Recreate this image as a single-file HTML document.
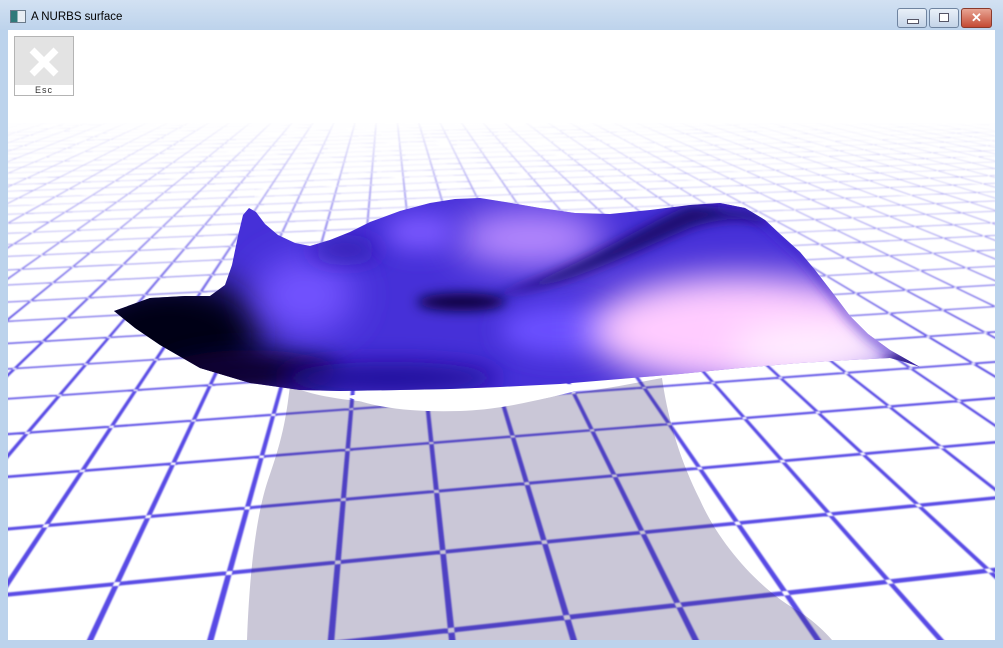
<!DOCTYPE html>
<html><head><meta charset="utf-8"><style>
html,body{margin:0;padding:0;width:1003px;height:648px;overflow:hidden;background:#bcd3ec;font-family:"Liberation Sans",sans-serif}
#win{position:absolute;left:0;top:0;width:1003px;height:648px}
.tb{position:absolute;left:0;top:0;width:1003px;height:30px;background:linear-gradient(#d2e1f2,#bdd3ec)}
.title{position:absolute;left:31px;top:11px;font-size:11.5px;color:#000}
.ico{position:absolute;left:10px;top:10px;width:14px;height:11px;border:1px solid #6a7a8a;background:linear-gradient(90deg,#2f7a7a 45%,#e8eef4 45%)}
.btn{position:absolute;top:8px;height:18px;border:1px solid #6f84a0;border-radius:3px;background:linear-gradient(#e9f0f8,#c4d4e8)}
.cl{background:linear-gradient(#e8a594,#c44a34);border-color:#8a3a2c}
#client{position:absolute;left:8px;top:30px;width:987px;height:610px;overflow:hidden;background:#fff}
.esc{position:absolute;left:6px;top:6px;width:58px;height:58px;border:1px solid #b4b4b4;background:#e3e3e3}
.esc .lbl{position:absolute;left:0;bottom:0;width:58px;height:10px;background:#fff;font-size:9px;line-height:10px;text-align:center;letter-spacing:1px;color:#333}
</style></head><body>
<div id="win">
<div class="tb"><div class="ico"></div><div class="title">A NURBS surface</div>
<div class="btn" style="left:897px;width:28px"><div style="position:absolute;left:9px;top:10px;width:10px;height:3px;background:#fff;border:1px solid #556"></div></div>
<div class="btn" style="left:929px;width:28px"><div style="position:absolute;left:9px;top:4px;width:8px;height:7px;border:1px solid #556;background:#fff"></div></div>
<div class="btn cl" style="left:961px;width:29px"><div style="position:absolute;left:0;top:0;width:29px;text-align:center;color:#fff;font-weight:bold;font-size:13px;line-height:18px">✕</div></div>
</div>
<div id="client">
<svg id="s" width="987" height="610" viewBox="8 30 987 610" style="position:absolute;left:0;top:0">
<defs>
<filter id="bl" x="-5%" y="-5%" width="110%" height="110%"><feGaussianBlur stdDeviation="0.8"/></filter>
<filter id="b20" x="-150%" y="-150%" width="400%" height="400%"><feGaussianBlur stdDeviation="18"/></filter>
<filter id="b10" x="-150%" y="-150%" width="400%" height="400%"><feGaussianBlur stdDeviation="12"/></filter>
<filter id="b5" x="-150%" y="-150%" width="400%" height="400%"><feGaussianBlur stdDeviation="6"/></filter>
<clipPath id="gc"><rect x="8" y="123" width="987" height="520"/></clipPath>
<linearGradient id="fade" x1="0" y1="120" x2="0" y2="340" gradientUnits="userSpaceOnUse">
<stop offset="0" stop-color="#fff" stop-opacity="1"/>
<stop offset="0.05" stop-color="#fff" stop-opacity="0.85"/>
<stop offset="0.3" stop-color="#fff" stop-opacity="0.55"/>
<stop offset="1" stop-color="#fff" stop-opacity="0"/>
</linearGradient>
<clipPath id="surf"><path id="sp" d="M114,311 L150,298 L185,296 L210,296 L225,285 L232,265 L238,236 L243,215 L249,208 L256,212 L265,224 L278,235 L295,243 L310,246 L330,240 L350,232 L370,222 L400,211 L430,203 L455,199 L480,198 L505,202 L540,208 L575,213 L610,214 L650,210 L690,205 L720,203 L745,208 L765,220 L780,234 L800,252 L815,270 L832,292 L850,316 L868,334 L890,350 L920,367 L905,362 L890,358 L850,360 L800,363 L740,368 L680,374 L620,379 L560,384 L500,387 L450,389 L400,390 L340,391 L300,390 L250,383 L200,368 L160,345 L135,328 Z"/></clipPath>
</defs>
<g clip-path="url(#gc)"><g id="grid" filter="url(#bl)" fill="rgb(65,50,225)" fill-opacity="0.88"></g></g>
<rect x="8" y="118" width="987" height="230" fill="url(#fade)"/>
<path d="M290,385 C300,392 330,398 350,400 C380,404 390,402 440,410 C470,412 520,404 560,395 C600,390 630,384 662,378 C668,420 680,460 700,500 C720,545 760,590 800,612 C815,622 825,632 832,640 L247,640 C250,560 258,510 268,480 C282,440 286,420 290,385 Z" fill="rgb(50,40,100)" fill-opacity="0.26"/>
<path d="M345,396 C380,410 420,412 460,411 C500,410 540,400 600,385 L560,384 L400,390 Z" fill="#fff"/>
<g clip-path="url(#surf)">
<rect x="100" y="190" width="830" height="210" fill="#4630d8"/>
<ellipse cx="170" cy="335" rx="95" ry="60" fill="#040018" filter="url(#b20)"/>
<ellipse cx="250" cy="372" rx="90" ry="22" fill="#080030" filter="url(#b10)"/>
<ellipse cx="390" cy="378" rx="110" ry="16" fill="#24109a" filter="url(#b10)"/>
<ellipse cx="305" cy="295" rx="50" ry="38" fill="#7252ff" filter="url(#b20)"/>
<ellipse cx="345" cy="250" rx="35" ry="8" fill="#2a18a0" filter="url(#b10)"/>
<ellipse cx="530" cy="238" rx="75" ry="28" fill="#b98cff" filter="url(#b20)"/>
<ellipse cx="420" cy="232" rx="35" ry="18" fill="#7a58ff" filter="url(#b10)"/>
<ellipse cx="462" cy="302" rx="45" ry="9" fill="#0a0040" filter="url(#b5)"/>
<path d="M490,296 C560,290 620,258 690,228 C720,218 745,216 770,226 L760,210 L690,205 C640,225 580,270 490,296 Z" fill="#1a0a70" filter="url(#b5)"/>
<ellipse cx="560" cy="330" rx="60" ry="25" fill="#6a50ff" filter="url(#b10)"/>
<ellipse cx="740" cy="330" rx="150" ry="55" fill="#ffccff" filter="url(#b20)"/>
<ellipse cx="820" cy="348" rx="90" ry="25" fill="#fff0ff" filter="url(#b20)"/>
<ellipse cx="905" cy="360" rx="20" ry="8" fill="#2a1880" filter="url(#b5)"/>
<path d="M720,205 L745,208 L765,220 L780,234 L800,252 L815,270 L832,292 L850,316 L868,334 L890,350" stroke="#3a22c8" stroke-width="6" fill="none" filter="url(#b5)"/>
</g>
</svg>
<div class="esc"><svg width="58" height="48" style="position:absolute;left:0;top:0"><path d="M17,13 L41,37 M41,13 L17,37" stroke="#fff" stroke-width="7"/></svg><div class="lbl">Esc</div></div>
</div>
</div>
<script>
(function(){
var pts=[[1,0,452,628],[1,1,443,552],[1,2,437,492],[1,3,432,443],[1,4,428,403],
[0,1,338,562],[0,2,343,499],[0,3,348,451],[0,4,351,410],
[-1,1,230,573],[-1,2,247,508],[-2,1,115,582],[-2,2,148,517],
[2,0,567,617],[3,0,680,605],[4,0,785,592],
[2,1,543,543],[3,1,642,534],[4,1,737,525],[5,1,830,517],[5,2,783,460],[5,3,743,415]];
var N=[],v=[];for(var i=0;i<8;i++){N.push([0,0,0,0,0,0,0,0]);v.push(0);}
function add(row,val){for(var i=0;i<8;i++){for(var j=0;j<8;j++)N[i][j]+=row[i]*row[j];v[i]+=row[i]*val;}}
pts.forEach(function(p){var c=p[0],r=p[1],x=p[2],y=p[3];
add([c,r,1,0,0,0,-c*x,-r*x],x);add([0,0,0,c,r,1,-c*y,-r*y],y);});
var A=N,b=v;
for(var k=0;k<8;k++){var p=k;for(var j=k+1;j<8;j++)if(Math.abs(A[j][k])>Math.abs(A[p][k]))p=j;
var t=A[k];A[k]=A[p];A[p]=t;t=b[k];b[k]=b[p];b[p]=t;
for(var j=k+1;j<8;j++){var f=A[j][k]/A[k][k];for(var m=k;m<8;m++)A[j][m]-=f*A[k][m];b[j]-=f*b[k];}}
var h=new Array(8);for(var k=7;k>=0;k--){var s=b[k];for(var m=k+1;m<8;m++)s-=A[k][m]*h[m];h[k]=s/A[k][k];}
function W(c,r){return h[6]*c+h[7]*r+1}
function P(c,r){var w=W(c,r);return [(h[0]*c+h[1]*r+h[2])/w,(h[3]*c+h[4]*r+h[5])/w]}
var eps=0.02;
function seg(a,bb){var w0=W(a[0],a[1]),w1=W(bb[0],bb[1]);
if(w0<eps&&w1<eps)return null;
if(w0<eps){var t=(eps-w0)/(w1-w0);a=[a[0]+(bb[0]-a[0])*t,a[1]+(bb[1]-a[1])*t];}
if(w1<eps){var t=(eps-w0)/(w1-w0);bb=[a[0]+(bb[0]-a[0])*t,a[1]+(bb[1]-a[1])*t];}
return [P(a[0],a[1]),P(bb[0],bb[1])];}
var hw=0.027,out=[];
function quad(p0,p1,q0,q1){var s1=seg(p0,p1),s2=seg(q0,q1);if(!s1||!s2)return;
out.push('M'+s1[0][0].toFixed(1)+','+s1[0][1].toFixed(1)+'L'+s1[1][0].toFixed(1)+','+s1[1][1].toFixed(1)+'L'+s2[1][0].toFixed(1)+','+s2[1][1].toFixed(1)+'L'+s2[0][0].toFixed(1)+','+s2[0][1].toFixed(1)+'Z');}
var R0=-4,R1=120,C0=-120,C1=120;
for(var c=C0;c<=C1;c++)quad([c-hw,R0],[c-hw,R1],[c+hw,R0],[c+hw,R1]);
for(var r=R0;r<=R1;r++)quad([C0,r-hw],[C1,r-hw],[C0,r+hw],[C1,r+hw]);
var g=document.getElementById('grid');
var pth=document.createElementNS('http://www.w3.org/2000/svg','path');
pth.setAttribute('d',out.join(''));g.appendChild(pth);
})();
</script>
</body></html>
